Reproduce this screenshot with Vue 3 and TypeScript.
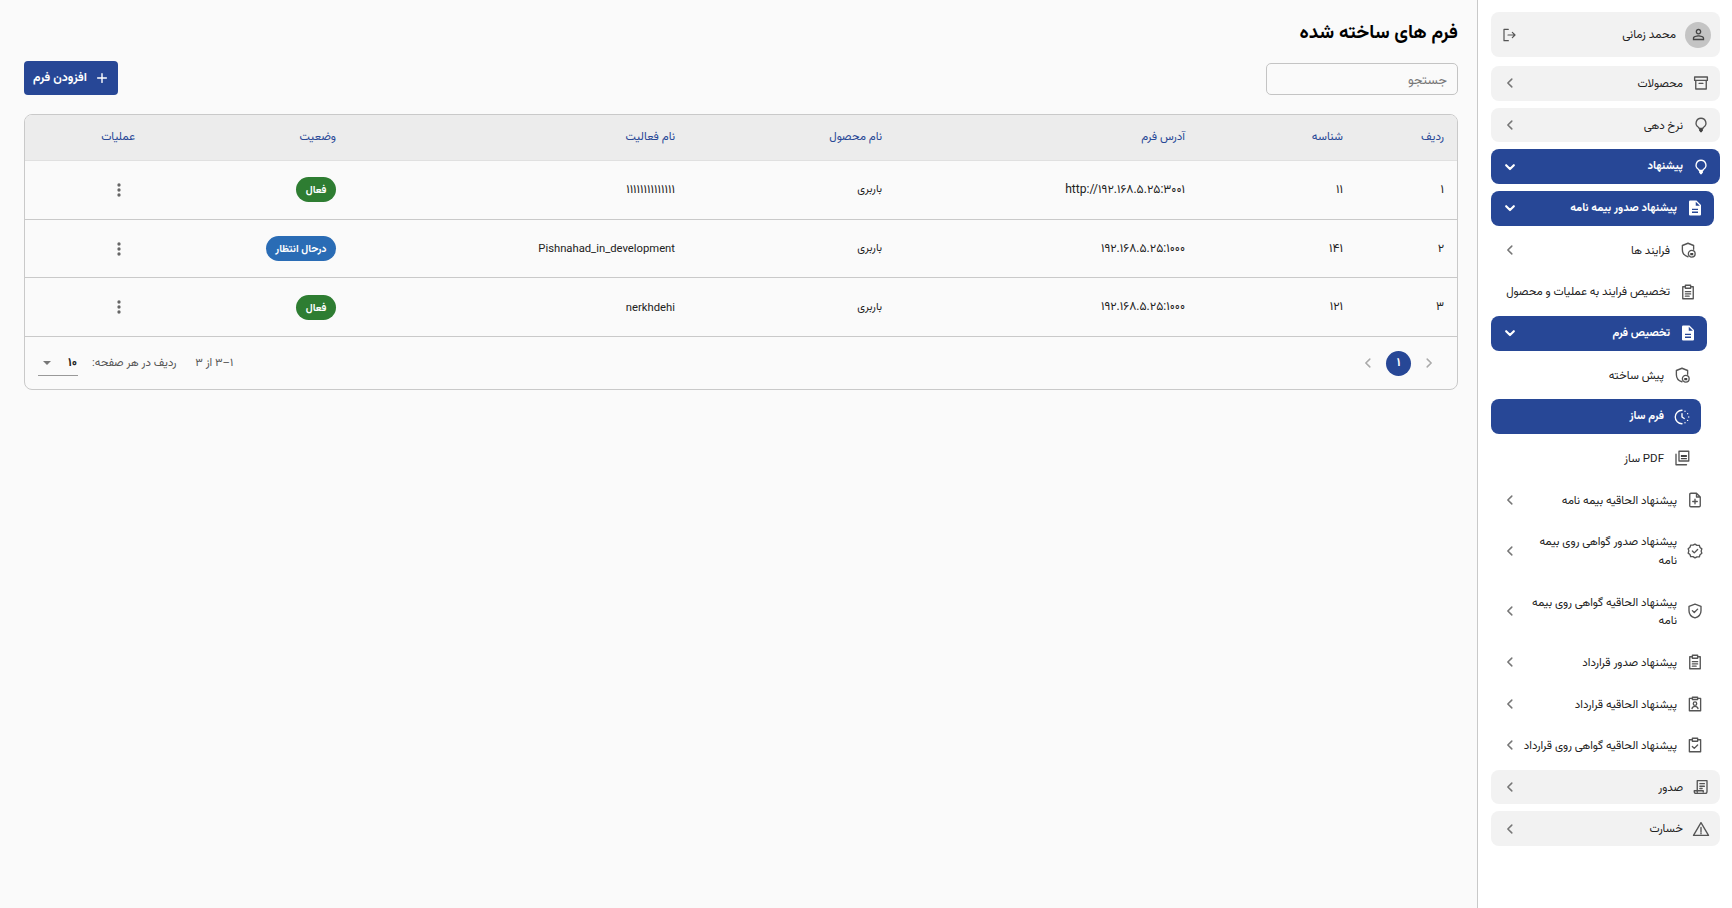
<script setup lang="ts">
interface Shape { d: string; fill?: boolean }
const icons: Record<string, Shape[]> = {
  archive: [{ d: 'M3.500 4h17v4.500h-17zM5 8.500V20h14V8.500M9.500 12.500h5' }],
  bulb: [{ d: 'M12 3a6.500 6.500 0 0 0-3.500 12c.6.500 1 1 1 1.700h5c0-.7.4-1.200 1-1.700A6.500 6.500 0 0 0 12 3z' }, { d: 'M9.500 17h5v2l-1.500 2.500h-2L9.500 19z', fill: true }],
  doc: [{ d: 'M6 2h8l6 6v12.500a1.500 1.500 0 0 1-1.500 1.500h-13A1.500 1.500 0 0 1 4 20.500v-17A1.500 1.500 0 0 1 5.500 2zM13 3.500V9h5.500zM8 13v1.800h8V13zM8 16.800v1.800h8v-1.800z', fill: true }],
  shieldLock: [{ d: 'M19.500 11V6L12 3 4.500 6v5.500c0 4.500 3 8 7.500 9.500' }, { d: 'M17 12.500a4.500 4.500 0 1 0 0 9 4.500 4.500 0 0 0 0-9z' }, { d: 'M15 16h4v3h-4z', fill: true }],
  clipList: [{ d: 'M8.500 5H5v16h14V5h-3.500M8.500 3h7v4h-7zM8.500 11.500h7M8.500 14.500h7M8.500 17.500h5' }],
  clockDash: [{ d: 'M12 3a9 9 0 0 0 0 18M12 7.500V12l3 2M16 4.300v.01M19.500 7.500v.01M21 12v.01M19.500 16.500v.01M16 19.700v.01' }],
  pdf: [{ d: 'M8 3h13v13H8zM4 7v14h14' }, { d: 'M10.500 8h8v2.500h-8zM10.500 12h8v1.500h-8z', fill: true }],
  filePlus: [{ d: 'M14 3H6.500A1.500 1.500 0 0 0 5 4.500v15A1.500 1.500 0 0 0 6.500 21h11a1.500 1.500 0 0 0 1.500-1.500V8zM14 3v5h5M12 11v6M9 14h6' }],
  verified: [{ d: 'M12 2.800l2.600 1.700 3.100-.1 1 2.900 2.400 1.900-.9 3 .9 2.900-2.400 1.900-1 2.900-3.100-.1L12 21.200l-2.600-1.700-3.100.1-1-2.900-2.400-1.900.9-3-.9-2.900 2.400-1.900 1-2.900 3.100.1zM8.500 12l2.500 2.500 4.500-4.500' }],
  shieldCheck: [{ d: 'M12 2.800l8 3v5.700c0 4.800-3.300 8.200-8 9.700-4.700-1.500-8-4.900-8-9.700V5.800zM8.500 11.500l2.500 2.500 4.500-4.500' }],
  clipUser: [{ d: 'M8.500 4.500H4.500V21h15V4.500h-4M8.500 3h7v3h-7zM8 18c.5-2 2-2.800 4-2.800s3.500.8 4 2.800M12 9.200a2.300 2.300 0 1 0 0 4.600 2.300 2.300 0 0 0 0-4.600z' }],
  clipCheck: [{ d: 'M8.500 5H4.500v16h15V5h-4M8.500 3h7v4h-7zM8.500 14l2.500 2.500 4.500-4.500' }],
  receipt: [{ d: 'M7 19V3.500h13V18a2.500 2.500 0 0 1-2.500 2.500H5.500A2.500 2.500 0 0 1 3 18v-1h12v1.500M10.500 7.500h6M10.500 11h6M10.500 14h3' }],
  warn: [{ d: 'M12 3.500L2 20.500h20zM12 10v5.500M12 17.300v1' }],
  logout: [{ d: 'M11 3.500H4.500v17H11M10.500 12H21M17 8l4 4-4 4' }],
  person: [{ d: 'M12 5.900c1.160 0 2.100.94 2.100 2.100s-.94 2.100-2.100 2.100S9.900 9.160 9.900 8s.94-2.100 2.100-2.100m0 9c2.970 0 6.100 1.460 6.100 2.100v1.100H5.900V17c0-.64 3.130-2.100 6.100-2.100M12 4C9.790 4 8 5.790 8 8s1.790 4 4 4 4-1.790 4-4-1.790-4-4-4zm0 9c-2.670 0-8 1.340-8 4v3h16v-3c0-2.660-5.330-4-8-4z', fill: true }],
  dots: [{ d: 'M12 8a2 2 0 1 0 0-4 2 2 0 0 0 0 4zm0 2a2 2 0 1 0 0 4 2 2 0 0 0 0-4zm0 6a2 2 0 1 0 0 4 2 2 0 0 0 0-4z', fill: true }],
  plus: [{ d: 'M12 4.500v15M4.500 12h15' }],
}

interface Item { label: string; icon: string; level: number; tone: 'grey' | 'plain' | 'active'; arrow: 'left' | 'down' | 'none' }
const menu: Item[] = [
  { label: 'محصولات', icon: 'archive', level: 0, tone: 'grey', arrow: 'left' },
  { label: 'نرخ دهی', icon: 'bulb', level: 0, tone: 'grey', arrow: 'left' },
  { label: 'پیشنهاد', icon: 'bulb', level: 0, tone: 'active', arrow: 'down' },
  { label: 'پیشنهاد صدور بیمه نامه', icon: 'doc', level: 1, tone: 'active', arrow: 'down' },
  { label: 'فرایند ها', icon: 'shieldLock', level: 2, tone: 'plain', arrow: 'left' },
  { label: 'تخصیص فرایند به عملیات و محصول', icon: 'clipList', level: 2, tone: 'plain', arrow: 'none' },
  { label: 'تخصیص فرم', icon: 'doc', level: 2, tone: 'active', arrow: 'down' },
  { label: 'پیش ساخته', icon: 'shieldLock', level: 3, tone: 'plain', arrow: 'none' },
  { label: 'فرم ساز', icon: 'clockDash', level: 3, tone: 'active', arrow: 'none' },
  { label: 'PDF ساز', icon: 'pdf', level: 3, tone: 'plain', arrow: 'none' },
  { label: 'پیشنهاد الحاقیه بیمه نامه', icon: 'filePlus', level: 1, tone: 'plain', arrow: 'left' },
  { label: 'پیشنهاد صدور گواهی روی بیمه نامه', icon: 'verified', level: 1, tone: 'plain', arrow: 'left' },
  { label: 'پیشنهاد الحاقیه گواهی روی بیمه نامه', icon: 'shieldCheck', level: 1, tone: 'plain', arrow: 'left' },
  { label: 'پیشنهاد صدور قرارداد', icon: 'clipList', level: 1, tone: 'plain', arrow: 'left' },
  { label: 'پیشنهاد الحاقیه قرارداد', icon: 'clipUser', level: 1, tone: 'plain', arrow: 'left' },
  { label: 'پیشنهاد الحاقیه گواهی روی قرارداد', icon: 'clipCheck', level: 1, tone: 'plain', arrow: 'left' },
  { label: 'صدور', icon: 'receipt', level: 0, tone: 'grey', arrow: 'left' },
  { label: 'خسارت', icon: 'warn', level: 0, tone: 'grey', arrow: 'left' },
]

const columns = ['ردیف', 'شناسه', 'آدرس فرم', 'نام محصول', 'نام فعالیت', 'وضعیت', 'عملیات']
const rows = [
  { n: '۱', id: '۱۱', url: 'http://۱۹۲.۱۶۸.۵.۲۵:۳۰۰۱', product: 'باربری', activity: '۱۱۱۱۱۱۱۱۱۱۱۱۱۱', activityClass: 'num', status: 'فعال', kind: 'ok' },
  { n: '۲', id: '۱۴۱', url: '۱۹۲.۱۶۸.۵.۲۵:۱۰۰۰', product: 'باربری', activity: 'Pishnahad_in_development', activityClass: 'latin', status: 'درحال انتظار', kind: 'wait' },
  { n: '۳', id: '۱۲۱', url: '۱۹۲.۱۶۸.۵.۲۵:۱۰۰۰', product: 'باربری', activity: 'nerkhdehi', activityClass: 'latin', status: 'فعال', kind: 'ok' },
]
</script>

<template>
  <div class="page" dir="rtl">
    <aside class="sidebar">
      <div class="user">
        <span class="avatar">
          <svg class="avatar-icon" viewBox="0 0 24 24"><path v-for="s in icons.person" :key="s.d" :d="s.d" class="fill" /></svg>
        </span>
        <span class="user-name">محمد زمانی</span>
        <svg class="logout" viewBox="0 0 24 24"><path v-for="s in icons.logout" :key="s.d" :d="s.d" class="line" /></svg>
      </div>
      <div
        v-for="item in menu"
        :key="item.label"
        class="item"
        :class="['level-' + item.level, 'tone-' + item.tone]"
      >
        <svg class="item-icon" viewBox="0 0 24 24">
          <path v-for="s in icons[item.icon]" :key="s.d" :d="s.d" :class="s.fill ? 'fill' : 'line'" />
        </svg>
        <span class="item-label">{{ item.label }}</span>
        <svg v-if="item.arrow === 'left'" class="chev" viewBox="0 0 10 10"><path d="M6.500 1.800L3.200 5l3.300 3.200" /></svg>
        <svg v-else-if="item.arrow === 'down'" class="chev chev-down" viewBox="0 0 10 10"><path d="M1.800 3.500L5 6.700l3.200-3.200" /></svg>
      </div>
    </aside>

    <main class="main">
      <h1 class="title">فرم های ساخته شده</h1>
      <div class="toolbar">
        <input class="search" type="text" placeholder="جستجو" />
        <button class="add" type="button">
          <svg class="add-icon" viewBox="0 0 24 24"><path :d="icons.plus[0].d" class="line" /></svg>
          <span>افزودن فرم</span>
        </button>
      </div>

      <section class="card">
        <table class="table">
          <colgroup>
            <col class="c1" /><col class="c2" /><col class="c3" /><col class="c4" /><col class="c5" /><col class="c6" /><col />
          </colgroup>
          <thead>
            <tr><th v-for="c in columns" :key="c">{{ c }}</th></tr>
          </thead>
          <tbody>
            <tr v-for="r in rows" :key="r.n">
              <td class="num">{{ r.n }}</td>
              <td class="num">{{ r.id }}</td>
              <td class="num"><bdi dir="ltr">{{ r.url }}</bdi></td>
              <td>{{ r.product }}</td>
              <td :class="r.activityClass"><bdi dir="ltr">{{ r.activity }}</bdi></td>
              <td><span class="badge" :class="'badge-' + r.kind">{{ r.status }}</span></td>
              <td>
                <span class="menu-btn">
                  <svg class="dots" viewBox="0 0 24 24"><path :d="icons.dots[0].d" class="fill" /></svg>
                </span>
              </td>
            </tr>
          </tbody>
        </table>
        <footer class="pager">
          <div class="pages">
            <svg class="page-chev" viewBox="0 0 10 10"><path d="M3.500 1.800L6.800 5 3.500 8.200" /></svg>
            <span class="page-current">۱</span>
            <svg class="page-chev" viewBox="0 0 10 10"><path d="M6.500 1.800L3.200 5l3.300 3.200" /></svg>
          </div>
          <div class="range">
            <span>۱–۳ از ۳</span>
            <span class="per-page">ردیف در هر صفحه:</span>
            <span class="select">
              <span class="select-value">۱۰</span>
              <span class="select-arrow"></span>
            </span>
          </div>
        </footer>
      </section>
    </main>
  </div>
</template>

<style>
html, body { margin: 0; padding: 0; background: #fff; }
</style>

<style scoped>
.page {
  display: flex;
  height: 908px;
  overflow: hidden;
  font-family: Roboto, "Vazirmatn", "Noto Sans Arabic", "DejaVu Sans", sans-serif;
  color: #222;
}
.sidebar {
  width: 255px;
  flex: none;
  box-sizing: border-box;
  background: #fff;
  border-left: 1px solid #c9c9c9;
  padding: 12px 12px 0 13px;
  display: flex;
  flex-direction: column;
  gap: 7px;
}
.user {
  height: 45px;
  margin-bottom: 2px;
  border-radius: 8px;
  background: #f2f2f2;
  display: flex;
  align-items: center;
  padding: 0 9px 0 10px;
}
.avatar {
  width: 26px;
  height: 26px;
  border-radius: 50%;
  background: #c4c4c4;
  display: flex;
  align-items: center;
  justify-content: center;
}
.avatar-icon { width: 17px; height: 17px; }
.user-name { flex: 1; margin-right: 9px; font-size: 11.800px; }
.logout { width: 16px; height: 16px; }
.line { fill: none; stroke: #555; stroke-width: 1.800; stroke-linecap: round; stroke-linejoin: round; }
.fill { fill: #444; }
.item {
  display: flex;
  align-items: center;
  padding: 8px 10px 8px 13px;
  border-radius: 8px;
  font-size: 11.500px;
  line-height: 18.650px;
}
.level-1 { margin-right: 6px; }
.level-2 { margin-right: 13px; }
.level-3 { margin-right: 19px; }
.tone-grey { background: #f2f2f2; }
.tone-active { background: #274796; color: #fff; font-weight: 700; font-size: 11.200px; }
.tone-active .line { stroke: #fff; }
.tone-active .fill { fill: #fff; }
.tone-active .chev path { stroke: #fff; stroke-width: 1.800; }
.item-icon { width: 18px; height: 18px; flex: none; margin-left: 9px; }
.item-label { flex: 1; min-width: 0; }
.chev { width: 12px; height: 12px; flex: none; margin-right: 6px; }
.chev path { fill: none; stroke: #777; stroke-width: 1.300; stroke-linecap: round; stroke-linejoin: round; }

.main {
  flex: 1;
  min-width: 0;
  background: #fafafa;
  padding: 16px 19px 0 24px;
}
.title { margin: 0 0 15px; font-size: 19px; line-height: 32px; font-weight: 700; color: #000; }
.toolbar { display: flex; align-items: center; justify-content: space-between; }
.search {
  width: 192px;
  height: 32px;
  box-sizing: border-box;
  border: 1px solid #c4c4c4;
  border-radius: 5px;
  background: transparent;
  padding: 0 10px;
  font: 13px Roboto, "Vazirmatn", "Noto Sans Arabic", "DejaVu Sans", sans-serif;
  outline: none;
}
.search::placeholder { color: #777; opacity: 1; }
.add {
  width: 94px;
  height: 34px;
  margin-top: -2px;
  border: 0;
  border-radius: 4px;
  background: #274796;
  color: #fff;
  display: flex;
  align-items: center;
  justify-content: center;
  gap: 8px;
  font: 700 12.200px Roboto, "Vazirmatn", "Noto Sans Arabic", "DejaVu Sans", sans-serif;
  padding: 0;
}
.add-icon { width: 14px; height: 14px; }
.add-icon .line { stroke: #fff; stroke-width: 2.400; }
.card {
  margin-top: 19px;
  border: 1px solid #c9c9c9;
  border-radius: 8px;
  overflow: hidden;
}
.table { width: 100%; border-collapse: collapse; table-layout: fixed; }
.c1 { width: 101px; }
.c2 { width: 158px; }
.c3 { width: 303px; }
.c4 { width: 207px; }
.c5 { width: 339px; }
.c6 { width: 201px; }
th, td { padding: 0 13px; text-align: right; }
th {
  height: 43px;
  padding-bottom: 2px;
  background: #ececec;
  color: #274796;
  font-size: 11.600px;
  font-weight: 400;
  border-bottom: 1px solid #e0e0e0;
}
td {
  height: 57.700px;
  font-size: 11px;
  color: #222;
  border-bottom: 1px solid #c9c9c9;
}
td.num { font-size: 12.100px; }
td.latin { font-size: 11.250px; }
.badge {
  display: inline-block;
  height: 25px;
  line-height: 25px;
  padding: 0 9.500px;
  border-radius: 13px;
  color: #fff;
  font-size: 10.500px;
  font-weight: 700;
}
.badge-ok { background: #2e7d32; }
.badge-wait { background: #2a6cb5; }
.menu-btn { width: 33px; height: 32px; display: flex; align-items: center; justify-content: center; }
.dots { width: 20px; height: 20px; }
.dots .fill { fill: #666; }
.pager {
  height: 52px;
  display: flex;
  align-items: center;
  justify-content: space-between;
  padding: 0 22px 0 13px;
}
.pages { display: flex; align-items: center; gap: 12px; }
.page-chev { width: 12px; height: 12px; }
.page-chev path { fill: none; stroke: #aaa; stroke-width: 1.300; stroke-linecap: round; stroke-linejoin: round; }
.page-current {
  width: 25px;
  height: 25px;
  border-radius: 50%;
  background: #274796;
  color: #fff;
  font-size: 12px;
  display: flex;
  align-items: center;
  justify-content: center;
  font-weight: 700;
}
.range { display: flex; align-items: center; font-size: 11.400px; color: #555; }
.per-page { margin-right: 19px; }
.select {
  width: 40px;
  height: 26px;
  margin-right: 14px;
  border-bottom: 1px solid #999;
  display: flex;
  align-items: center;
  justify-content: space-between;
  box-sizing: border-box;
  padding: 0 1px 0 5px;
  color: #222;
  font-size: 12px;
  font-weight: 700;
}
.select-arrow {
  width: 0;
  height: 0;
  border-left: 4px solid transparent;
  border-right: 4px solid transparent;
  border-top: 4px solid #777;
}
</style>
